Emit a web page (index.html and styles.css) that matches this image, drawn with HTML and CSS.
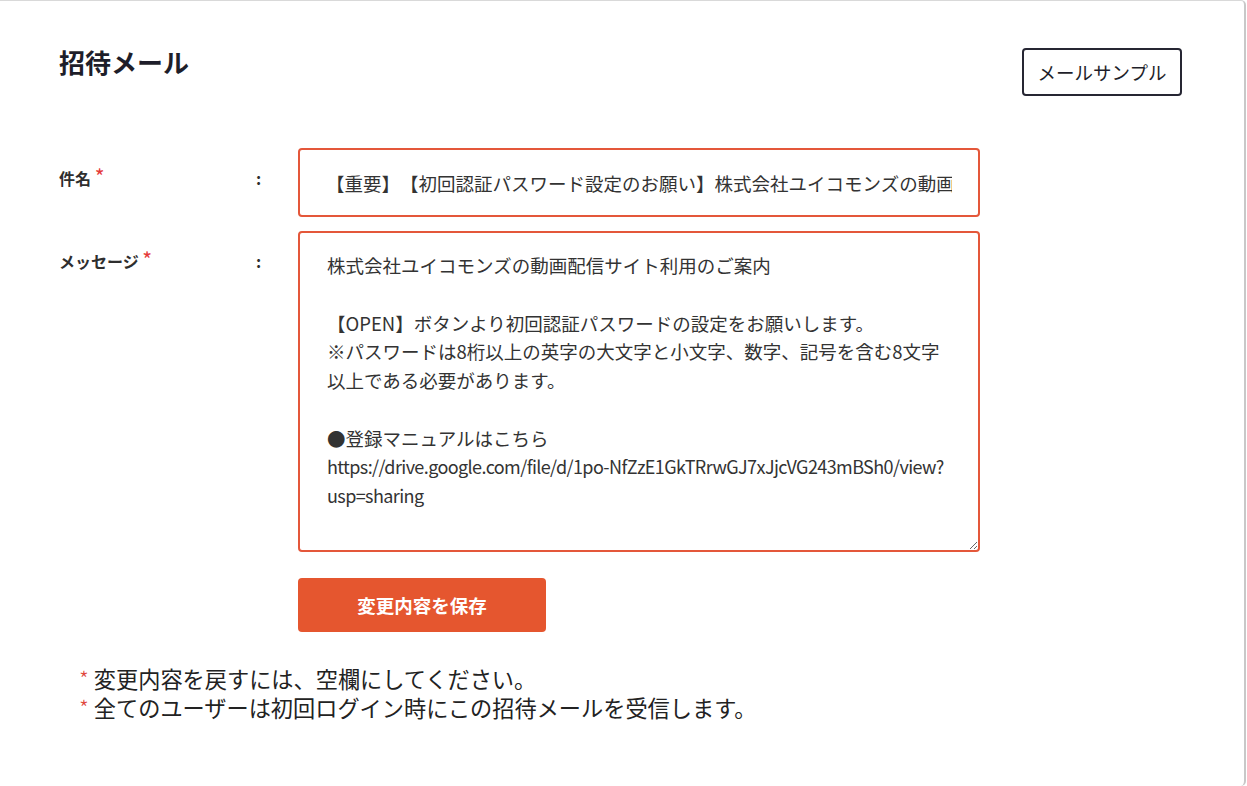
FILE: index.html
```html
<!DOCTYPE html>
<html lang="ja">
<head>
<meta charset="utf-8">
<title>招待メール</title>
<link rel="stylesheet" href="styles.css">
</head>
<body>
<div class="card">
  <div class="header">
    <h1 class="title">招待メール</h1>
    <button class="sample-btn" type="button">メールサンプル</button>
  </div>
  <div class="form">
    <div class="label">件名 <span class="req">*</span></div>
    <div class="colon">:</div>
    <input class="field-input" type="text" value="【重要】【初回認証パスワード設定のお願い】株式会社ユイコモンズの動画配信サイト利用のご案内">

    <div class="label">メッセージ <span class="req">*</span></div>
    <div class="colon">:</div>
    <div class="field-textarea" contenteditable="true" role="textbox" aria-multiline="true">株式会社ユイコモンズの動画配信サイト利用のご案内

【OPEN】ボタンより初回認証パスワードの設定をお願いします。
※パスワードは8桁以上の英字の大文字と小文字、数字、記号を含む8文字以上である必要があります。

●登録マニュアルはこちら
<span class="url">https://drive.google.com/file/d/1po&#8209;NfZzE1GkTRrwGJ7xJjcVG243mBSh0/view?usp=sharing</span></div>

    <div class="actions">
      <button class="save-btn" type="button">変更内容を保存</button>
    </div>
  </div>
  <ul class="notes">
    <li><span class="note-star">*</span> 変更内容を戻すには、空欄にしてください。</li>
    <li><span class="note-star">*</span> 全てのユーザーは初回ログイン時にこの招待メールを受信します。</li>
  </ul>
</div>
</body>
</html>
```

FILE: styles.css
```css
html, body {
  margin: 0;
  padding: 0;
  background: #ffffff;
}

body {
  font-family: "Noto Sans CJK JP", "Noto Sans", sans-serif;
  color: #2b2b2b;
}

.card {
  box-sizing: border-box;
  width: 1246px;
  height: 786px;
  border-top: 1px solid #d9d9d9;
  border-right: 2px solid #c8c8c8;
  border-top-right-radius: 5px;
  border-bottom-right-radius: 5px;
  padding: 0 62px 0 59px;
}

.header {
  display: flex;
  justify-content: space-between;
  align-items: flex-start;
}

.title {
  margin: 43px 0 0;
  font-size: 26px;
  line-height: 36px;
  font-weight: 700;
  color: #1e1e2a;
}

.sample-btn {
  box-sizing: border-box;
  margin-top: 47px;
  width: 160px;
  height: 48px;
  border: 2px solid #262633;
  border-radius: 4px;
  background: #ffffff;
  color: #1f1f2b;
  font-family: inherit;
  font-size: 18.5px;
  padding: 0;
  cursor: pointer;
}

.form {
  margin-top: 52px;
  display: grid;
  grid-template-columns: 195px 44px 682px;
  row-gap: 14px;
}

.label,
.colon {
  padding-top: 18px;
  font-size: 16px;
  line-height: 24px;
  font-weight: 700;
  color: #2e2e2e;
}

.colon {
  padding-left: 2px;
}

.req {
  color: #e53a3a;
  font-weight: 400;
  font-size: 21px;
  line-height: 1;
}

.field-input,
.field-textarea {
  box-sizing: border-box;
  width: 682px;
  border: 2px solid #e4573a;
  border-radius: 4px;
  font-family: inherit;
  font-size: 18.5px;
  color: #333333;
  background: #ffffff;
  outline: none;
  margin: 0;
}

.field-input {
  height: 69px;
  padding: 0 26px;
  text-spacing-trim: space-all;
}

.field-textarea {
  height: 321px;
  padding: 18px 27px;
  line-height: 28.75px;
  white-space: pre-wrap;
  resize: both;
  overflow: auto;
}

.url {
  font-size: 18px;
  letter-spacing: -0.6px;
}

.actions {
  grid-column: 3;
  margin-top: 12px;
}

.save-btn {
  width: 248px;
  height: 54px;
  border: none;
  border-radius: 4px;
  background: #e5562f;
  color: #ffffff;
  font-family: inherit;
  font-size: 18.5px;
  font-weight: 700;
  padding: 0;
  cursor: pointer;
}

.notes {
  list-style: none;
  margin: 32px 0 0;
  padding: 0 0 0 20px;
  font-size: 22.2px;
  line-height: 29px;
  color: #222222;
}

.note-star {
  color: #e0473c;
  font-weight: 300;
}
```
